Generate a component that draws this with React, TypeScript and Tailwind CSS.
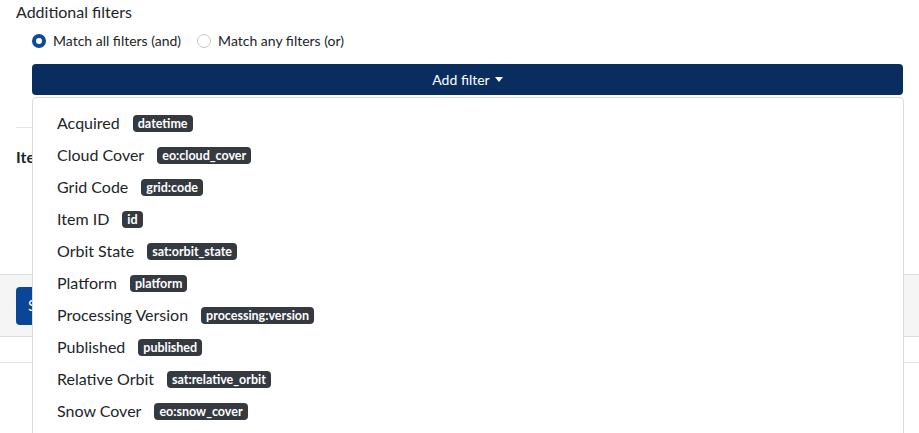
import React from "react";

const filters = [
  { label: "Acquired", key: "datetime" },
  { label: "Cloud Cover", key: "eo:cloud_cover" },
  { label: "Grid Code", key: "grid:code" },
  { label: "Item ID", key: "id" },
  { label: "Orbit State", key: "sat:orbit_state" },
  { label: "Platform", key: "platform" },
  { label: "Processing Version", key: "processing:version" },
  { label: "Published", key: "published" },
  { label: "Relative Orbit", key: "sat:relative_orbit" },
  { label: "Snow Cover", key: "eo:snow_cover" },
];

function Radio({ checked, label }: { checked?: boolean; label: string }) {
  return (
    <label className="flex items-center gap-[7px]">
      {checked ? (
        <span className="w-[14px] h-[14px] rounded-full bg-[#0b4a9c] flex items-center justify-center">
          <span className="w-[6px] h-[6px] rounded-full bg-white" />
        </span>
      ) : (
        <span className="w-[14px] h-[14px] rounded-full border border-[#c4c8cc] bg-white" />
      )}
      <span>{label}</span>
    </label>
  );
}

export default function App() {
  return (
    <div
      className="relative w-[919px] h-[433px] overflow-hidden bg-white text-[#212529]"
      style={{ fontFamily: "Lato, 'Noto Sans', sans-serif" }}
    >
      <div className="px-4">
        <h3 className="text-[16px] leading-[24px] pt-0">Additional filters</h3>
        <div className="flex gap-4 pl-4 mt-[7px] text-[14px] leading-[20px]">
          <Radio checked label="Match all filters (and)" />
          <Radio label="Match any filters (or)" />
        </div>
        <div className="pl-4 mt-[13px]">
          <button className="w-full h-[31px] rounded bg-[#0a2d5f] text-white text-[14px] flex items-center justify-center gap-[5px]">
            Add filter
            <svg width="8" height="5" viewBox="0 0 8 5">
              <path d="M0 0h8L4 5z" fill="white" />
            </svg>
          </button>
        </div>
        <hr className="mt-[32px] border-t border-[#e2e4e6]" />
        <div className="font-bold text-[16px] mt-[19px] leading-[20px]">Item IDs</div>
        <div className="pl-4 mt-[11px]">
          <div className="h-[34px] border border-[#a9b3c1] rounded" />
        </div>
      </div>
      <div className="mt-[62px] h-[63px] bg-[#f5f5f5] border-y border-[#dcdcdc] px-4 flex items-center">
        <button className="h-[38px] px-3 rounded bg-[#0b4596] text-white text-[15px]">Search</button>
      </div>
      <div className="mt-[25px] border-t border-[#e2e4e6]" />

      <div className="absolute left-[32px] top-[97px] w-[872px] h-[360px] bg-white border border-[#dcdcdc] rounded-[4px] pt-[9px]">
        {filters.map((f) => (
          <div key={f.key} className="h-[32px] flex items-center pl-[24px] gap-[13px] text-[16px]">
            <span>{f.label}</span>
            <span className="bg-[#343a40] text-white text-[12.5px] font-bold rounded-[4px] px-[5px] h-[17px] leading-[17px]">
              {f.key}
            </span>
          </div>
        ))}
      </div>
    </div>
  );
}
